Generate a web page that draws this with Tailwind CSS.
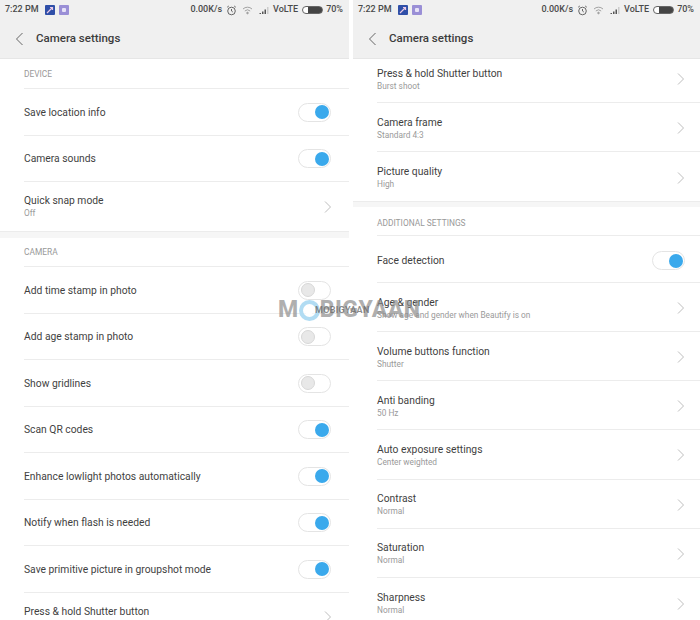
<!doctype html>
<html><head><meta charset="utf-8"><script src="https://cdn.jsdelivr.net/npm/@tailwindcss/browser@4"></script></head>
<body class="m-0 bg-white">
<div class="relative flex w-[700px] h-[620px] overflow-hidden bg-white font-['Roboto','Liberation_Sans',sans-serif]">

<!-- LEFT -->
<div class="w-[349px] h-[620px] overflow-hidden shrink-0">
  <div class="h-[59px] bg-[#f0f0f0] border-b border-[#e6e6e6] flex flex-col">
    <div class="h-[18px] pt-[2px] flex items-center pl-[5px] pr-[6px] text-[9px] font-medium text-[#4a4a4a]">
      <span>7:22 PM</span>
      <span class="ml-[6px] w-[10px] h-[10px] rounded-[1px] bg-[#2f4fa8] flex items-center justify-center"><svg width="8" height="8" viewBox="0 0 8 8" fill="none" stroke="#e9c9e6" stroke-width="1.2"><path d="M1 7 6.5 1.5M4 1.5h2.5V4"/></svg></span>
      <span class="ml-[4px] w-[10px] h-[10px] rounded-[1px] bg-[#9a8fd6] flex items-center justify-center"><span class="w-[4px] h-[4px] bg-[#e6e2f7] rounded-[1px]"></span></span>
      <span class="ml-auto">0.00K/s</span>
      <svg class="ml-[4px]" width="11" height="11" viewBox="0 0 11 11" fill="none" stroke="#555" stroke-width="0.9"><circle cx="5.5" cy="6" r="3.8"/><path d="M5.5 4v2l1.3 1M1.2 2.2 2.8 1M9.8 2.2 8.2 1"/></svg>
      <svg class="ml-[5px]" width="11" height="9" viewBox="0 0 11 9" fill="none" stroke="#999" stroke-width="0.9"><path d="M1 3a6.5 6.5 0 0 1 9 0M2.8 5a4 4 0 0 1 5.4 0"/><circle cx="5.5" cy="7" r="0.8" fill="#999"/></svg>
      <svg class="ml-[6px]" width="11" height="8" viewBox="0 0 10 8"><path d="M0 7h1.5v1H0zM2.5 5.5H4V8H2.5zM5 3.5h1.5V8H5z" fill="#555"/><path d="M7.5 1H9v7H7.5z" fill="#ccc"/></svg>
      <span class="ml-[3px]">VoLTE</span>
      <span class="ml-[4px] w-[21px] h-[8px] rounded-full border border-[#666] bg-[linear-gradient(90deg,#fff_25%,#444_25%)]"></span>
      <span class="ml-[3px]">70%</span>
    </div>
    <div class="flex-1 flex items-center pl-[15px] pt-[2px]">
      <svg width="9" height="14" viewBox="0 0 9 14" fill="none" stroke="#666" stroke-width="1"><path d="M7.5 1 1.5 7l6 6"/></svg>
      <span class="ml-[12px] text-[11.5px] font-medium text-[#3c3c3c]">Camera settings</span>
    </div>
  </div>
  <div class="h-[30px] pt-[1px] ml-[24px] flex items-center border-b border-[#ececec] text-[8.4px] text-[#999999]">DEVICE</div>
  <div class="h-[46.5px] pt-[1px] ml-[24px] pr-[18px] flex items-center justify-between border-b border-[#ececec] text-[10.3px] text-[#3f3f3f]"><span>Save location info</span><span class="relative w-[33px] h-[19px] rounded-full border border-[#e4e4e4] bg-white"><span class="absolute right-[1.5px] top-[1.5px] w-[14px] h-[14px] rounded-full bg-[#3aa9ec]"></span></span></div>
  <div class="h-[46.5px] pt-[1px] ml-[24px] pr-[18px] flex items-center justify-between border-b border-[#ececec] text-[10.3px] text-[#3f3f3f]"><span>Camera sounds</span><span class="relative w-[33px] h-[19px] rounded-full border border-[#e4e4e4] bg-white"><span class="absolute right-[1.5px] top-[1.5px] w-[14px] h-[14px] rounded-full bg-[#3aa9ec]"></span></span></div>
  <div class="h-[49px] ml-[24px] pr-[18px] flex items-center justify-between text-[#3f3f3f]"><div class="flex flex-col"><span class="text-[10.3px] leading-[13px]">Quick snap mode</span><span class="text-[8.3px] leading-[12px] text-[#9a9a9a]">Off</span></div><svg width="7" height="12" viewBox="0 0 7 12" fill="none" stroke="#bdbdbd" stroke-width="1"><path d="M1 .5 6.5 6 1 11.5"/></svg></div>
  <div class="h-[7px] bg-[#f6f6f6] border-t border-[#ececec]"></div>
  <div class="h-[29px] pt-[1px] ml-[24px] flex items-center border-b border-[#ececec] text-[8.4px] text-[#999999]">CAMERA</div>
  <div class="h-[46.5px] pt-[1px] ml-[24px] pr-[18px] flex items-center justify-between border-b border-[#ececec] text-[10.3px] text-[#3f3f3f]"><span>Add time stamp in photo</span><span class="relative w-[33px] h-[19px] rounded-full border border-[#e4e4e4] bg-white"><span class="absolute left-[1.5px] top-[1.5px] w-[14px] h-[14px] rounded-full bg-[#e8e8e8] border border-[#d8d8d8]"></span></span></div>
  <div class="h-[46.5px] pt-[1px] ml-[24px] pr-[18px] flex items-center justify-between border-b border-[#ececec] text-[10.3px] text-[#3f3f3f]"><span>Add age stamp in photo</span><span class="relative w-[33px] h-[19px] rounded-full border border-[#e4e4e4] bg-white"><span class="absolute left-[1.5px] top-[1.5px] w-[14px] h-[14px] rounded-full bg-[#e8e8e8] border border-[#d8d8d8]"></span></span></div>
  <div class="h-[46.5px] pt-[1px] ml-[24px] pr-[18px] flex items-center justify-between border-b border-[#ececec] text-[10.3px] text-[#3f3f3f]"><span>Show gridlines</span><span class="relative w-[33px] h-[19px] rounded-full border border-[#e4e4e4] bg-white"><span class="absolute left-[1.5px] top-[1.5px] w-[14px] h-[14px] rounded-full bg-[#e8e8e8] border border-[#d8d8d8]"></span></span></div>
  <div class="h-[46.5px] pt-[1px] ml-[24px] pr-[18px] flex items-center justify-between border-b border-[#ececec] text-[10.3px] text-[#3f3f3f]"><span>Scan QR codes</span><span class="relative w-[33px] h-[19px] rounded-full border border-[#e4e4e4] bg-white"><span class="absolute right-[1.5px] top-[1.5px] w-[14px] h-[14px] rounded-full bg-[#3aa9ec]"></span></span></div>
  <div class="h-[46.5px] pt-[1px] ml-[24px] pr-[18px] flex items-center justify-between border-b border-[#ececec] text-[10.3px] text-[#3f3f3f]"><span>Enhance lowlight photos automatically</span><span class="relative w-[33px] h-[19px] rounded-full border border-[#e4e4e4] bg-white"><span class="absolute right-[1.5px] top-[1.5px] w-[14px] h-[14px] rounded-full bg-[#3aa9ec]"></span></span></div>
  <div class="h-[46.5px] pt-[1px] ml-[24px] pr-[18px] flex items-center justify-between border-b border-[#ececec] text-[10.3px] text-[#3f3f3f]"><span>Notify when flash is needed</span><span class="relative w-[33px] h-[19px] rounded-full border border-[#e4e4e4] bg-white"><span class="absolute right-[1.5px] top-[1.5px] w-[14px] h-[14px] rounded-full bg-[#3aa9ec]"></span></span></div>
  <div class="h-[46.5px] pt-[1px] ml-[24px] pr-[18px] flex items-center justify-between border-b border-[#ececec] text-[10.3px] text-[#3f3f3f]"><span>Save primitive picture in groupshot mode</span><span class="relative w-[33px] h-[19px] rounded-full border border-[#e4e4e4] bg-white"><span class="absolute right-[1.5px] top-[1.5px] w-[14px] h-[14px] rounded-full bg-[#3aa9ec]"></span></span></div>
  <div class="h-[28px] pt-[12px] ml-[24px] pr-[18px] flex items-start justify-between text-[#3f3f3f]"><span class="text-[10.3px] leading-[13px]">Press &amp; hold Shutter button</span><svg class="mt-[6px]" width="7" height="12" viewBox="0 0 7 12" fill="none" stroke="#bdbdbd" stroke-width="1"><path d="M1 .5 6.5 6 1 11.5"/></svg></div>
</div>

<div class="w-[4px] shrink-0 bg-white"></div>

<!-- RIGHT -->
<div class="w-[347px] h-[620px] overflow-hidden shrink-0">
  <div class="h-[59px] bg-[#f0f0f0] border-b border-[#e6e6e6] flex flex-col">
    <div class="h-[18px] pt-[2px] flex items-center pl-[5px] pr-[6px] text-[9px] font-medium text-[#4a4a4a]">
      <span>7:22 PM</span>
      <span class="ml-[6px] w-[10px] h-[10px] rounded-[1px] bg-[#2f4fa8] flex items-center justify-center"><svg width="8" height="8" viewBox="0 0 8 8" fill="none" stroke="#e9c9e6" stroke-width="1.2"><path d="M1 7 6.5 1.5M4 1.5h2.5V4"/></svg></span>
      <span class="ml-[4px] w-[10px] h-[10px] rounded-[1px] bg-[#9a8fd6] flex items-center justify-center"><span class="w-[4px] h-[4px] bg-[#e6e2f7] rounded-[1px]"></span></span>
      <span class="ml-auto">0.00K/s</span>
      <svg class="ml-[4px]" width="11" height="11" viewBox="0 0 11 11" fill="none" stroke="#555" stroke-width="0.9"><circle cx="5.5" cy="6" r="3.8"/><path d="M5.5 4v2l1.3 1M1.2 2.2 2.8 1M9.8 2.2 8.2 1"/></svg>
      <svg class="ml-[5px]" width="11" height="9" viewBox="0 0 11 9" fill="none" stroke="#999" stroke-width="0.9"><path d="M1 3a6.5 6.5 0 0 1 9 0M2.8 5a4 4 0 0 1 5.4 0"/><circle cx="5.5" cy="7" r="0.8" fill="#999"/></svg>
      <svg class="ml-[6px]" width="11" height="8" viewBox="0 0 10 8"><path d="M0 7h1.5v1H0zM2.5 5.5H4V8H2.5zM5 3.5h1.5V8H5z" fill="#555"/><path d="M7.5 1H9v7H7.5z" fill="#ccc"/></svg>
      <span class="ml-[3px]">VoLTE</span>
      <span class="ml-[4px] w-[21px] h-[8px] rounded-full border border-[#666] bg-[linear-gradient(90deg,#fff_25%,#444_25%)]"></span>
      <span class="ml-[3px]">70%</span>
    </div>
    <div class="flex-1 flex items-center pl-[15px] pt-[2px]">
      <svg width="9" height="14" viewBox="0 0 9 14" fill="none" stroke="#666" stroke-width="1"><path d="M7.5 1 1.5 7l6 6"/></svg>
      <span class="ml-[12px] text-[11.5px] font-medium text-[#3c3c3c]">Camera settings</span>
    </div>
  </div>
  <div class="h-[44px] pb-[3px] ml-[24px] pr-[16px] flex items-center justify-between border-b border-[#ececec]"><div class="flex flex-col"><span class="text-[10.3px] leading-[13px] text-[#3f3f3f]">Press &amp; hold Shutter button</span><span class="text-[8.3px] leading-[12px] text-[#9a9a9a]">Burst shoot</span></div><svg width="7" height="12" viewBox="0 0 7 12" fill="none" stroke="#bdbdbd" stroke-width="1"><path d="M1 .5 6.5 6 1 11.5"/></svg></div>
  <div class="h-[49px] pt-[2px] ml-[24px] pr-[16px] flex items-center justify-between border-b border-[#ececec]"><div class="flex flex-col"><span class="text-[10.3px] leading-[13px] text-[#3f3f3f]">Camera frame</span><span class="text-[8.3px] leading-[12px] text-[#9a9a9a]">Standard 4:3</span></div><svg width="7" height="12" viewBox="0 0 7 12" fill="none" stroke="#bdbdbd" stroke-width="1"><path d="M1 .5 6.5 6 1 11.5"/></svg></div>
  <div class="h-[49px] pt-[2px] ml-[24px] pr-[16px] flex items-center justify-between"><div class="flex flex-col"><span class="text-[10.3px] leading-[13px] text-[#3f3f3f]">Picture quality</span><span class="text-[8.3px] leading-[12px] text-[#9a9a9a]">High</span></div><svg width="7" height="12" viewBox="0 0 7 12" fill="none" stroke="#bdbdbd" stroke-width="1"><path d="M1 .5 6.5 6 1 11.5"/></svg></div>
  <div class="h-[6px] bg-[#f6f6f6] border-t border-[#ececec]"></div>
  <div class="h-[29px] pt-[4px] ml-[24px] flex items-center border-b border-[#ececec] text-[8.4px] text-[#999999]">ADDITIONAL SETTINGS</div>
  <div class="h-[47px] pt-[3px] ml-[24px] pr-[15px] flex items-center justify-between border-b border-[#ececec] text-[10.3px] text-[#3f3f3f]"><span>Face detection</span><span class="relative w-[33px] h-[19px] rounded-full border border-[#e4e4e4] bg-white"><span class="absolute right-[1.5px] top-[1.5px] w-[14px] h-[14px] rounded-full bg-[#3aa9ec]"></span></span></div>
  <div class="h-[49.15px] pt-[2px] ml-[24px] pr-[16px] flex items-center justify-between border-b border-[#ececec]"><div class="flex flex-col"><span class="text-[10.3px] leading-[13px] text-[#3f3f3f]">Age &amp; gender</span><span class="text-[8.3px] leading-[12px] text-[#9a9a9a]">Show age and gender when Beautify is on</span></div><svg width="7" height="12" viewBox="0 0 7 12" fill="none" stroke="#bdbdbd" stroke-width="1"><path d="M1 .5 6.5 6 1 11.5"/></svg></div>
  <div class="h-[49.15px] pt-[2px] ml-[24px] pr-[16px] flex items-center justify-between border-b border-[#ececec]"><div class="flex flex-col"><span class="text-[10.3px] leading-[13px] text-[#3f3f3f]">Volume buttons function</span><span class="text-[8.3px] leading-[12px] text-[#9a9a9a]">Shutter</span></div><svg width="7" height="12" viewBox="0 0 7 12" fill="none" stroke="#bdbdbd" stroke-width="1"><path d="M1 .5 6.5 6 1 11.5"/></svg></div>
  <div class="h-[49.15px] pt-[2px] ml-[24px] pr-[16px] flex items-center justify-between border-b border-[#ececec]"><div class="flex flex-col"><span class="text-[10.3px] leading-[13px] text-[#3f3f3f]">Anti banding</span><span class="text-[8.3px] leading-[12px] text-[#9a9a9a]">50 Hz</span></div><svg width="7" height="12" viewBox="0 0 7 12" fill="none" stroke="#bdbdbd" stroke-width="1"><path d="M1 .5 6.5 6 1 11.5"/></svg></div>
  <div class="h-[49.15px] pt-[2px] ml-[24px] pr-[16px] flex items-center justify-between border-b border-[#ececec]"><div class="flex flex-col"><span class="text-[10.3px] leading-[13px] text-[#3f3f3f]">Auto exposure settings</span><span class="text-[8.3px] leading-[12px] text-[#9a9a9a]">Center weighted</span></div><svg width="7" height="12" viewBox="0 0 7 12" fill="none" stroke="#bdbdbd" stroke-width="1"><path d="M1 .5 6.5 6 1 11.5"/></svg></div>
  <div class="h-[49.15px] pt-[2px] ml-[24px] pr-[16px] flex items-center justify-between border-b border-[#ececec]"><div class="flex flex-col"><span class="text-[10.3px] leading-[13px] text-[#3f3f3f]">Contrast</span><span class="text-[8.3px] leading-[12px] text-[#9a9a9a]">Normal</span></div><svg width="7" height="12" viewBox="0 0 7 12" fill="none" stroke="#bdbdbd" stroke-width="1"><path d="M1 .5 6.5 6 1 11.5"/></svg></div>
  <div class="h-[49.15px] pt-[2px] ml-[24px] pr-[16px] flex items-center justify-between border-b border-[#ececec]"><div class="flex flex-col"><span class="text-[10.3px] leading-[13px] text-[#3f3f3f]">Saturation</span><span class="text-[8.3px] leading-[12px] text-[#9a9a9a]">Normal</span></div><svg width="7" height="12" viewBox="0 0 7 12" fill="none" stroke="#bdbdbd" stroke-width="1"><path d="M1 .5 6.5 6 1 11.5"/></svg></div>
  <div class="h-[49.15px] pt-[3px] ml-[24px] pr-[16px] flex items-center justify-between"><div class="flex flex-col"><span class="text-[10.3px] leading-[13px] text-[#3f3f3f]">Sharpness</span><span class="text-[8.3px] leading-[12px] text-[#9a9a9a]">Normal</span></div><svg width="7" height="12" viewBox="0 0 7 12" fill="none" stroke="#bdbdbd" stroke-width="1"><path d="M1 .5 6.5 6 1 11.5"/></svg></div>
</div>

<!-- watermark -->
<div class="absolute left-[278px] top-[296px] h-[28px] flex items-center text-[23px] font-extrabold text-[#8c8c8c]/70 tracking-[0.5px] whitespace-nowrap">
  <span>M</span><span class="w-[21px] h-[21px] rounded-full border-[4px] border-[#a9d8f2]/90 bg-white/60 flex items-center justify-center"><span class="w-[6px] h-[11px] rounded-[1px] bg-white"></span></span><span>BIGYAAN</span>
  <span class="absolute left-[37px] top-[8px] text-[9px] leading-[12px] font-semibold tracking-[0.3px] text-[#6a6a6a]/80">MOBIGYAAN</span>
</div>
</div>
</body></html>
